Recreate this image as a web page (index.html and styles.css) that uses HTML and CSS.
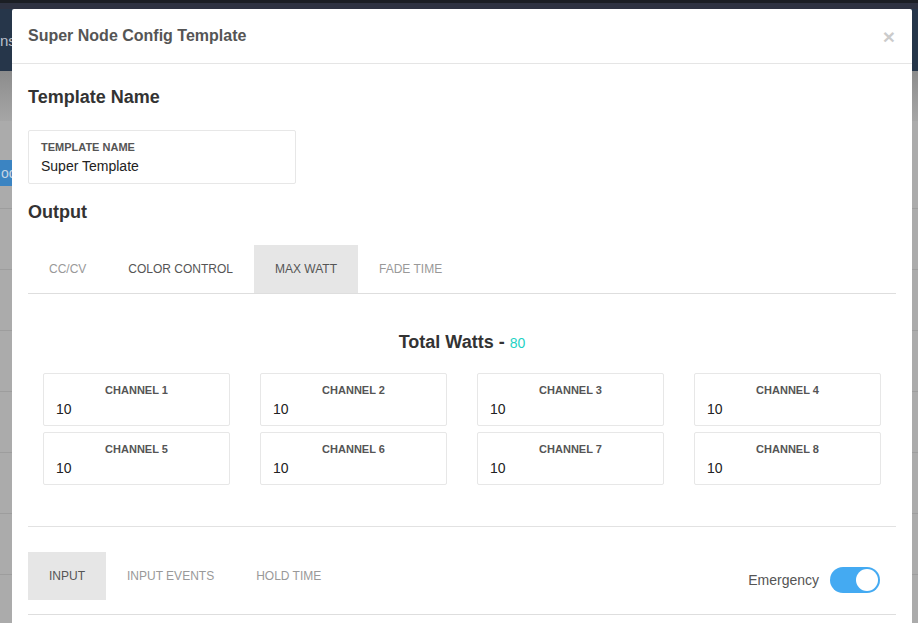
FILE: index.html
```html
<!DOCTYPE html>
<html>
<head>
<meta charset="utf-8">
<title>Super Node Config Template</title>
<link rel="stylesheet" href="styles.css">
</head>
<body>
<div class="app">
  <div class="topline"></div>
  <header class="navbar"><span class="brand">nses</span></header>
  <div class="toolbar"></div>
  <div class="list">
    <div class="row row-first"><span class="btn">ode</span></div>
    <div class="row"></div>
    <div class="row"></div>
    <div class="row"></div>
    <div class="row"></div>
    <div class="row"></div>
    <div class="row"></div>
    <div class="row"></div>
  </div>
</div>

<div class="modal">
  <div class="modal-header">
    <h3 class="modal-title">Super Node Config Template</h3>
    <span class="close">&times;</span>
  </div>
  <div class="modal-body">
    <h4 class="section-title first">Template Name</h4>
    <div class="field field-name">
      <div class="field-label">TEMPLATE NAME</div>
      <div class="field-value">Super Template</div>
    </div>

    <h4 class="section-title output">Output</h4>
    <div class="tabs">
      <span class="tab muted">CC/CV</span>
      <span class="tab">COLOR CONTROL</span>
      <span class="tab active">MAX WATT</span>
      <span class="tab muted">FADE TIME</span>
    </div>

    <div class="total">Total Watts - <span class="total-num">80</span></div>

    <div class="channels">
      <div class="field channel"><div class="field-label">CHANNEL 1</div><div class="field-value">10</div></div>
      <div class="field channel"><div class="field-label">CHANNEL 2</div><div class="field-value">10</div></div>
      <div class="field channel"><div class="field-label">CHANNEL 3</div><div class="field-value">10</div></div>
      <div class="field channel"><div class="field-label">CHANNEL 4</div><div class="field-value">10</div></div>
      <div class="field channel"><div class="field-label">CHANNEL 5</div><div class="field-value">10</div></div>
      <div class="field channel"><div class="field-label">CHANNEL 6</div><div class="field-value">10</div></div>
      <div class="field channel"><div class="field-label">CHANNEL 7</div><div class="field-value">10</div></div>
      <div class="field channel"><div class="field-label">CHANNEL 8</div><div class="field-value">10</div></div>
    </div>

    <hr class="divider">

    <div class="input-row">
      <div class="tabs tabs-plain">
        <span class="tab active">INPUT</span>
        <span class="tab muted">INPUT EVENTS</span>
        <span class="tab muted">HOLD TIME</span>
      </div>
      <div class="emergency">
        <span class="emergency-label">Emergency</span>
        <span class="toggle"><span class="knob"></span></span>
      </div>
    </div>
  </div>
</div>
</body>
</html>
```

FILE: styles.css
```css
html, body {
  margin: 0;
  padding: 0;
  height: 100%;
  overflow: hidden;
}
body {
  background: #ababab;
  font-family: "Liberation Sans", Arial, Helvetica, sans-serif;
  position: relative;
}

/* dimmed page behind the modal */
.app {
  display: flex;
  flex-direction: column;
}
.topline {
  height: 3px;
  background: #1b1e24;
  border-bottom: 6px solid #2e3241;
}
.navbar {
  height: 62px;
  background: #26364a;
  display: flex;
  align-items: center;
  overflow: hidden;
}
.brand {
  margin-left: 0;
  margin-top: 0;
  font-size: 15px;
  color: #b9c0ca;
}
.toolbar {
  height: 50px;
  background: linear-gradient(#8c8c8c, #a6a6a6);
}
.list {
  display: flex;
  flex-direction: column;
}
.row {
  height: 60px;
  border-bottom: 1px solid #9d9d9d;
}
.row-first {
  height: 87px;
  display: flex;
  align-items: flex-start;
}
.btn {
  margin-top: 39px;
  height: 26px;
  line-height: 26px;
  padding: 0 10px 0 1px;
  background: #3b84c2;
  color: #c7d6e4;
  font-size: 14px;
}

/* modal */
.modal {
  position: absolute;
  top: 9px;
  left: 12px;
  width: 900px;
  background: #fff;
  border-radius: 2px;
  padding-bottom: 40px;
}
.modal-header {
  display: flex;
  justify-content: space-between;
  align-items: center;
  padding: 16px 17px 16px 16px;
  border-bottom: 1px solid #e5e5e5;
}
.modal-title {
  margin: 0;
  font-size: 16px;
  line-height: 22px;
  font-weight: bold;
  color: #555;
}
.close {
  font-size: 21px;
  font-weight: bold;
  line-height: 1;
  color: #000;
  opacity: 0.2;
}
.modal-body {
  padding: 0 16px;
}
.section-title {
  margin: 0;
  font-size: 18px;
  line-height: 22px;
  font-weight: bold;
  color: #333;
}
.section-title.first {
  margin-top: 22px;
}
.section-title.output {
  margin-top: 17px;
}

.field {
  border: 1px solid #e7e7e7;
  border-radius: 2px;
  padding: 10px 12px 8px 12px;
  box-sizing: border-box;
}
.field-label {
  font-size: 11px;
  line-height: 13px;
  font-weight: bold;
  color: #555;
}
.field-value {
  margin-top: 4px;
  font-size: 14px;
  line-height: 16px;
  color: #222;
}
.field-name {
  margin-top: 22px;
  width: 268px;
  padding-bottom: 9px;
}

.tabs {
  display: flex;
  margin-top: 22px;
  border-bottom: 1px solid #dedede;
}
.tab {
  height: 48px;
  line-height: 48px;
  padding: 0 21px;
  font-size: 12px;
  color: #555;
}
.tab.muted {
  color: #999;
}
.tab.active {
  background: #e6e6e6;
  color: #555;
}

.total {
  margin-top: 37px;
  text-align: center;
  font-size: 18px;
  line-height: 22px;
  font-weight: bold;
  color: #333;
}
.total-num {
  font-size: 14px;
  font-weight: normal;
  color: #1ed2c4;
}

.channels {
  margin-top: 19px;
  padding: 0 15px;
  display: grid;
  grid-template-columns: repeat(4, 1fr);
  column-gap: 30px;
  row-gap: 6px;
}
.channel .field-label {
  text-align: center;
}

.divider {
  margin: 41px 0 0 0;
  border: 0;
  border-top: 1px solid #e2e2e2;
  height: 0;
}

.input-row {
  margin-top: 25px;
  display: flex;
  justify-content: space-between;
  align-items: flex-start;
  padding-bottom: 14px;
  border-bottom: 1px solid #dedede;
}
.tabs-plain {
  margin-top: 0;
  border-bottom: 0;
}
.emergency {
  display: flex;
  align-items: center;
  margin-top: 15px;
  margin-right: 16px;
}
.emergency-label {
  font-size: 14px;
  color: #555;
  margin-right: 11px;
}
.toggle {
  width: 50px;
  height: 26px;
  border-radius: 13px;
  background: #44aaf2;
  display: flex;
  align-items: center;
  justify-content: flex-end;
  padding: 0 2px;
  box-sizing: border-box;
}
.knob {
  width: 22px;
  height: 22px;
  border-radius: 50%;
  background: #fff;
}
```
